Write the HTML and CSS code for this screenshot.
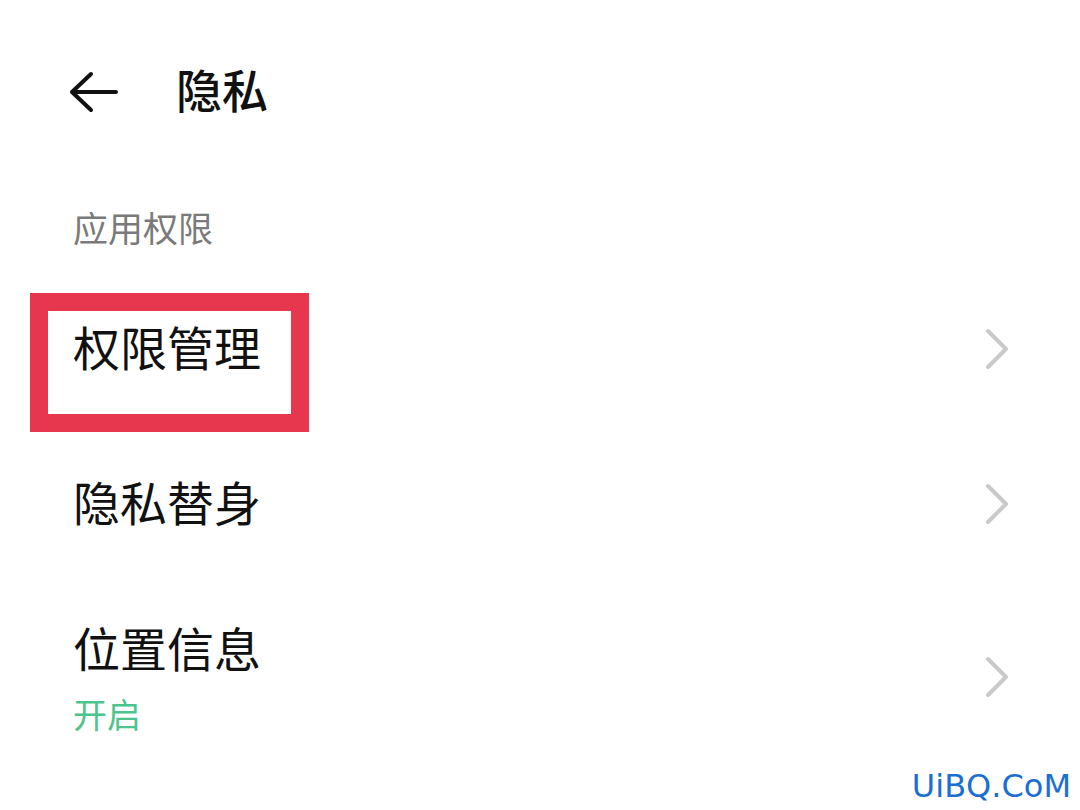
FILE: index.html
```html
<!DOCTYPE html>
<html>
<head>
  <title>隐私</title>
  <link rel="stylesheet" href="styles.css">
</head>
<body>

<!-- Top bar -->
<div class="topbar">
  <svg class="back" width="52" height="44" viewBox="0 0 52 44">
    <path d="M48 22 H5 M23 4 L4 22 L23 40" fill="none" stroke="#111" stroke-width="4" stroke-linecap="round" stroke-linejoin="round"/>
  </svg>
  <h1 class="title">隐私</h1>
</div>

<div class="section-label">应用权限</div>

<div class="list">
  <div class="row">
    <div class="row-text">
      <div class="row-title">权限管理</div>
    </div>
    <svg class="chevron" width="26" height="44" viewBox="0 0 26 44"><path d="M4 4 L22 22 L4 40" fill="none" stroke="#c9c9c9" stroke-width="4" stroke-linecap="round" stroke-linejoin="round"/></svg>
    <!-- annotation box drawn over the row -->
    <div class="highlight"></div>
  </div>

  <div class="row">
    <div class="row-text">
      <div class="row-title">隐私替身</div>
    </div>
    <svg class="chevron" width="26" height="44" viewBox="0 0 26 44"><path d="M4 4 L22 22 L4 40" fill="none" stroke="#c9c9c9" stroke-width="4" stroke-linecap="round" stroke-linejoin="round"/></svg>
  </div>

  <div class="row row-tall">
    <div class="row-text">
      <div class="row-title">位置信息</div>
      <div class="row-sub">开启</div>
    </div>
    <svg class="chevron" width="26" height="44" viewBox="0 0 26 44"><path d="M4 4 L22 22 L4 40" fill="none" stroke="#c9c9c9" stroke-width="4" stroke-linecap="round" stroke-linejoin="round"/></svg>
  </div>
</div>

<div class="watermark">UiBQ.CoM</div>

</body>
</html>
```

FILE: styles.css
```css
body {
  margin: 0;
  background: #fff;
  font-family: "Noto Sans CJK SC", "Noto Sans", sans-serif;
  color: #111;
  position: relative;
  height: 810px;
  overflow: hidden;
}

.topbar {
  height: 184px;
  display: flex;
  align-items: center;
  padding-left: 68px;
}

.back {
  display: block;
}

.title {
  margin: 0 0 6px 56px;
  font-size: 46px;
  font-weight: 500;
  line-height: 1.3;
}

.section-label {
  height: 87px;
  display: flex;
  align-items: center;
  padding-left: 73px;
  font-size: 35px;
  color: #7a7a7a;
  box-sizing: border-box;
  padding-bottom: 2px;
}

.row {
  position: relative;
  height: 155px;
  display: flex;
  align-items: center;
  padding: 0 70px 0 73px;
  box-sizing: border-box;
}

.row-text {
  flex: 1;
  padding-bottom: 6px;
}

.row-title {
  font-size: 47px;
  line-height: 62px;
}

.row-tall {
  height: 192px;
  align-items: flex-start;
  padding-top: 35px;
}

.row-tall .row-text {
  padding-bottom: 0;
}

.row-tall .chevron {
  margin-top: 39px;
}

.row-sub {
  margin-top: 11px;
  font-size: 34px;
  line-height: 50px;
  color: #4cc48e;
}

.chevron {
  display: block;
}

.highlight {
  position: absolute;
  left: 30px;
  top: 22px;
  width: 243px;
  height: 103px;
  border: 18px solid #e6374e;
}

.watermark {
  position: absolute;
  right: 9px;
  bottom: 5px;
  font-family: "DejaVu Sans", sans-serif;
  font-size: 32px;
  color: #1b6fd2;
}
```
